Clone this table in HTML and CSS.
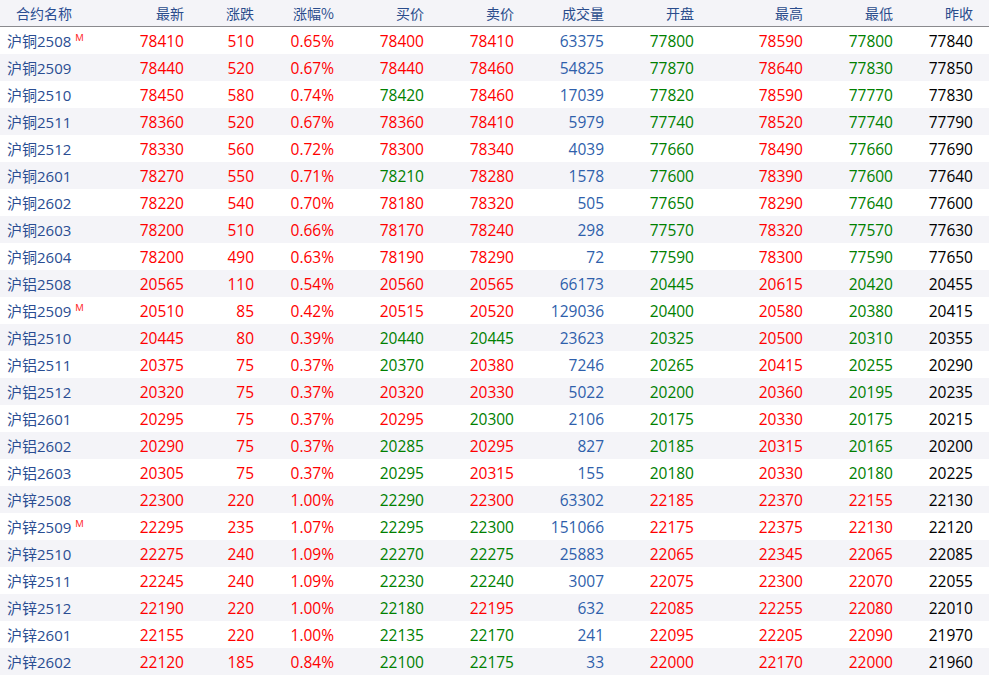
FILE: index.html
```html
<!DOCTYPE html>
<html lang="zh">
<head>
<meta charset="utf-8">
<title>行情</title>
<link rel="stylesheet" href="styles.css">
</head>
<body>
<div class="quote">
  <div class="row head">
    <div class="name">合约名称</div><div>最新</div><div>涨跌</div><div>涨幅%</div><div>买价</div><div>卖价</div><div>成交量</div><div>开盘</div><div>最高</div><div>最低</div><div>昨收</div>
  </div>
  <div class="row"><div class="name">沪铜2508<sup>M</sup></div><div class="r">78410</div><div class="r">510</div><div class="r">0.65%</div><div class="r">78400</div><div class="r">78410</div><div class="v">63375</div><div class="g">77800</div><div class="r">78590</div><div class="g">77800</div><div class="k">77840</div></div>
  <div class="row"><div class="name">沪铜2509</div><div class="r">78440</div><div class="r">520</div><div class="r">0.67%</div><div class="r">78440</div><div class="r">78460</div><div class="v">54825</div><div class="g">77870</div><div class="r">78640</div><div class="g">77830</div><div class="k">77850</div></div>
  <div class="row"><div class="name">沪铜2510</div><div class="r">78450</div><div class="r">580</div><div class="r">0.74%</div><div class="g">78420</div><div class="r">78460</div><div class="v">17039</div><div class="g">77820</div><div class="r">78590</div><div class="g">77770</div><div class="k">77830</div></div>
  <div class="row"><div class="name">沪铜2511</div><div class="r">78360</div><div class="r">520</div><div class="r">0.67%</div><div class="r">78360</div><div class="r">78410</div><div class="v">5979</div><div class="g">77740</div><div class="r">78520</div><div class="g">77740</div><div class="k">77790</div></div>
  <div class="row"><div class="name">沪铜2512</div><div class="r">78330</div><div class="r">560</div><div class="r">0.72%</div><div class="r">78300</div><div class="r">78340</div><div class="v">4039</div><div class="g">77660</div><div class="r">78490</div><div class="g">77660</div><div class="k">77690</div></div>
  <div class="row"><div class="name">沪铜2601</div><div class="r">78270</div><div class="r">550</div><div class="r">0.71%</div><div class="g">78210</div><div class="r">78280</div><div class="v">1578</div><div class="g">77600</div><div class="r">78390</div><div class="g">77600</div><div class="k">77640</div></div>
  <div class="row"><div class="name">沪铜2602</div><div class="r">78220</div><div class="r">540</div><div class="r">0.70%</div><div class="r">78180</div><div class="r">78320</div><div class="v">505</div><div class="g">77650</div><div class="r">78290</div><div class="g">77640</div><div class="k">77600</div></div>
  <div class="row"><div class="name">沪铜2603</div><div class="r">78200</div><div class="r">510</div><div class="r">0.66%</div><div class="r">78170</div><div class="r">78240</div><div class="v">298</div><div class="g">77570</div><div class="r">78320</div><div class="g">77570</div><div class="k">77630</div></div>
  <div class="row"><div class="name">沪铜2604</div><div class="r">78200</div><div class="r">490</div><div class="r">0.63%</div><div class="r">78190</div><div class="r">78290</div><div class="v">72</div><div class="g">77590</div><div class="r">78300</div><div class="g">77590</div><div class="k">77650</div></div>
  <div class="row"><div class="name">沪铝2508</div><div class="r">20565</div><div class="r">110</div><div class="r">0.54%</div><div class="r">20560</div><div class="r">20565</div><div class="v">66173</div><div class="g">20445</div><div class="r">20615</div><div class="g">20420</div><div class="k">20455</div></div>
  <div class="row"><div class="name">沪铝2509<sup>M</sup></div><div class="r">20510</div><div class="r">85</div><div class="r">0.42%</div><div class="r">20515</div><div class="r">20520</div><div class="v">129036</div><div class="g">20400</div><div class="r">20580</div><div class="g">20380</div><div class="k">20415</div></div>
  <div class="row"><div class="name">沪铝2510</div><div class="r">20445</div><div class="r">80</div><div class="r">0.39%</div><div class="g">20440</div><div class="g">20445</div><div class="v">23623</div><div class="g">20325</div><div class="r">20500</div><div class="g">20310</div><div class="k">20355</div></div>
  <div class="row"><div class="name">沪铝2511</div><div class="r">20375</div><div class="r">75</div><div class="r">0.37%</div><div class="g">20370</div><div class="r">20380</div><div class="v">7246</div><div class="g">20265</div><div class="r">20415</div><div class="g">20255</div><div class="k">20290</div></div>
  <div class="row"><div class="name">沪铝2512</div><div class="r">20320</div><div class="r">75</div><div class="r">0.37%</div><div class="r">20320</div><div class="r">20330</div><div class="v">5022</div><div class="g">20200</div><div class="r">20360</div><div class="g">20195</div><div class="k">20235</div></div>
  <div class="row"><div class="name">沪铝2601</div><div class="r">20295</div><div class="r">75</div><div class="r">0.37%</div><div class="r">20295</div><div class="g">20300</div><div class="v">2106</div><div class="g">20175</div><div class="r">20330</div><div class="g">20175</div><div class="k">20215</div></div>
  <div class="row"><div class="name">沪铝2602</div><div class="r">20290</div><div class="r">75</div><div class="r">0.37%</div><div class="g">20285</div><div class="r">20295</div><div class="v">827</div><div class="g">20185</div><div class="r">20315</div><div class="g">20165</div><div class="k">20200</div></div>
  <div class="row"><div class="name">沪铝2603</div><div class="r">20305</div><div class="r">75</div><div class="r">0.37%</div><div class="g">20295</div><div class="r">20315</div><div class="v">155</div><div class="g">20180</div><div class="r">20330</div><div class="g">20180</div><div class="k">20225</div></div>
  <div class="row"><div class="name">沪锌2508</div><div class="r">22300</div><div class="r">220</div><div class="r">1.00%</div><div class="g">22290</div><div class="r">22300</div><div class="v">63302</div><div class="r">22185</div><div class="r">22370</div><div class="r">22155</div><div class="k">22130</div></div>
  <div class="row"><div class="name">沪锌2509<sup>M</sup></div><div class="r">22295</div><div class="r">235</div><div class="r">1.07%</div><div class="g">22295</div><div class="g">22300</div><div class="v">151066</div><div class="r">22175</div><div class="r">22375</div><div class="r">22130</div><div class="k">22120</div></div>
  <div class="row"><div class="name">沪锌2510</div><div class="r">22275</div><div class="r">240</div><div class="r">1.09%</div><div class="g">22270</div><div class="g">22275</div><div class="v">25883</div><div class="r">22065</div><div class="r">22345</div><div class="r">22065</div><div class="k">22085</div></div>
  <div class="row"><div class="name">沪锌2511</div><div class="r">22245</div><div class="r">240</div><div class="r">1.09%</div><div class="g">22230</div><div class="g">22240</div><div class="v">3007</div><div class="r">22075</div><div class="r">22300</div><div class="r">22070</div><div class="k">22055</div></div>
  <div class="row"><div class="name">沪锌2512</div><div class="r">22190</div><div class="r">220</div><div class="r">1.00%</div><div class="g">22180</div><div class="r">22195</div><div class="v">632</div><div class="r">22085</div><div class="r">22255</div><div class="r">22080</div><div class="k">22010</div></div>
  <div class="row"><div class="name">沪锌2601</div><div class="r">22155</div><div class="r">220</div><div class="r">1.00%</div><div class="g">22135</div><div class="g">22170</div><div class="v">241</div><div class="r">22095</div><div class="r">22205</div><div class="r">22090</div><div class="k">21970</div></div>
  <div class="row"><div class="name">沪锌2602</div><div class="r">22120</div><div class="r">185</div><div class="r">0.84%</div><div class="g">22100</div><div class="g">22175</div><div class="v">33</div><div class="r">22000</div><div class="r">22170</div><div class="r">22000</div><div class="k">21960</div></div>
</div>
</body>
</html>
```
FILE: styles.css
```css
html, body {
  margin: 0;
  padding: 0;
  background: #ffffff;
}
body {
  font-family: "Open Sans", "Noto Sans CJK SC", sans-serif;
}
.quote {
  width: 989px;
}
.row {
  display: grid;
  grid-template-columns: 114px 70px 70px 80px 90px 90px 90px 90px 109px 90px 80px;
  padding-right: 16px;
  height: 27px;
  align-items: center;
  text-align: right;
  font-size: 15.5px;
  white-space: nowrap;
}
.row:nth-child(odd) {
  background: #f4f4f8;
}
.row.head {
  height: 26px;
  border-bottom: 1px solid #8a8a8e;
  background: #f4f4f8;
  color: #2a4c8c;
  font-size: 14px;
  font-family: "Noto Sans CJK SC", sans-serif;
}
.row.head .name {
  padding-left: 16px;
  font-size: 14px;
  font-family: "Noto Sans CJK SC", sans-serif;
}
.name {
  text-align: left;
  padding-left: 7px;
  color: #2a4d92;
  font-size: 15px;
  font-family: "Open Sans", "Noto Sans CJK SC", sans-serif;
}
.name sup {
  color: #ff2020;
  font-size: 9.5px;
  margin-left: 4px;
  vertical-align: 6px;
  line-height: 0;
}
.r { color: #ff0000; }
.g { color: #008000; }
.v { color: #2f5fab; }
.k { color: #000000; }
```
